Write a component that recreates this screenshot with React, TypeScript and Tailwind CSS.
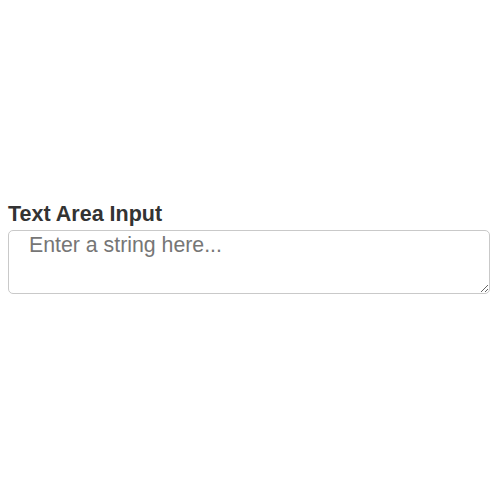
import React from "react";

export default function App() {
    return <div className="min-h-screen bg-white pl-2 pr-[10px] pt-[202px] font-['Liberation_Sans',Arial,sans-serif]">
        <label htmlFor="text-area" className="block text-[21.5px] leading-[24px] font-bold text-[#333333]">
            Text Area Input
        </label>
        <textarea
            id="text-area"
            placeholder="Enter a string here..."
            className="mt-[4px] block w-full h-[64px] rounded-[5px] border border-[#c9c9c9] bg-white px-5 pt-[2px] text-[21.3px] leading-[24px] text-[#333333] placeholder:text-[#767676] focus:outline-none"
        />
    </div>;
}
